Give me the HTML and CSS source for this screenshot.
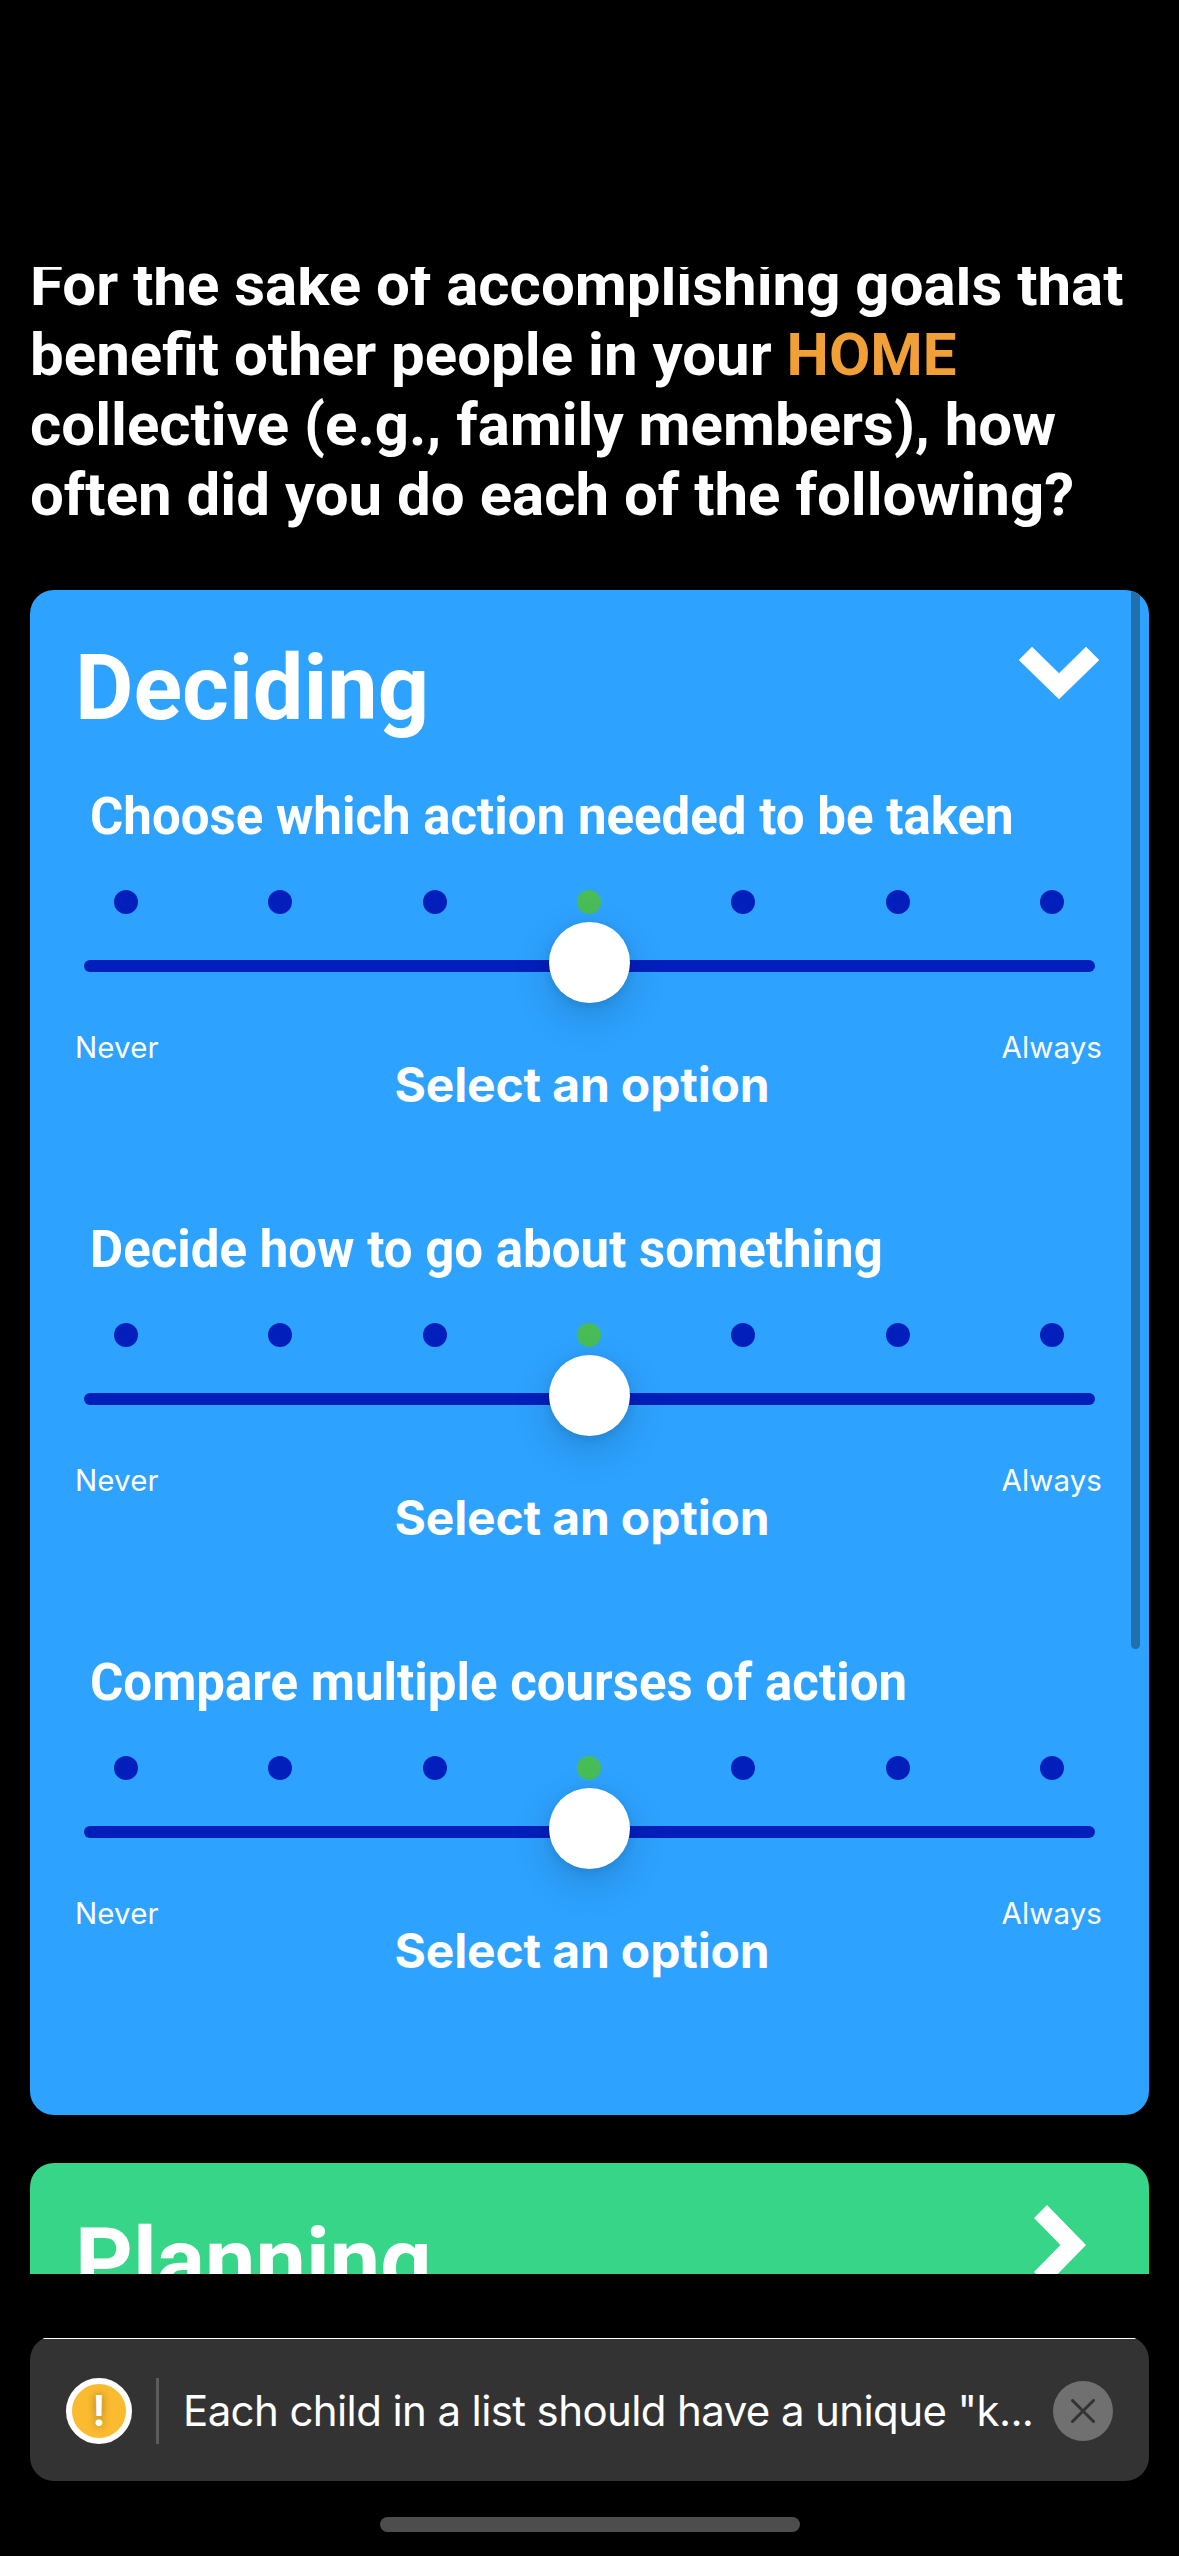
FILE: index.html
```
<!DOCTYPE html>
<html lang="en">
<head>
<meta charset="utf-8">
<title>Collective survey</title>
<link rel="stylesheet" href="styles.css">
</head>
<body>
<main class="screen">
  <div class="scroll">
    <h1 class="prompt">For the sake of accomplishing goals that<br>benefit other people in your <span class="accent">HOME</span><br>collective (e.g., family members), how<br>often did you do each of the following?</h1>

    <section class="card deciding">
      <header class="card-head">
        <h2>Deciding</h2>
        <svg class="chevron down" viewBox="0 0 80 52"><path d="M13 0 40 26.500 67 0 80 13 40 52 0 13Z" fill="#fff" stroke="#fff" stroke-width=".5" stroke-linejoin="round"/></svg>
      </header>
      <div class="question">
        <h3>Choose which action needed to be taken</h3>
        <div class="dots"><i></i><i></i><i></i><i class="on"></i><i></i><i></i><i></i></div>
        <div class="slider"><div class="track"></div><div class="thumb"></div></div>
        <div class="ends"><span>Never</span><span>Always</span></div>
        <p class="answer">Select an option</p>
      </div>
      <div class="question">
        <h3>Decide how to go about something</h3>
        <div class="dots"><i></i><i></i><i></i><i class="on"></i><i></i><i></i><i></i></div>
        <div class="slider"><div class="track"></div><div class="thumb"></div></div>
        <div class="ends"><span>Never</span><span>Always</span></div>
        <p class="answer">Select an option</p>
      </div>
      <div class="question">
        <h3>Compare multiple courses of action</h3>
        <div class="dots"><i></i><i></i><i></i><i class="on"></i><i></i><i></i><i></i></div>
        <div class="slider"><div class="track"></div><div class="thumb"></div></div>
        <div class="ends"><span>Never</span><span>Always</span></div>
        <p class="answer">Select an option</p>
      </div>
      <div class="scrollbar"></div>
    </section>

    <section class="card planning">
      <header class="card-head">
        <h2>Planning</h2>
        <svg class="chevron right" viewBox="0 0 52 80"><path d="M0 13 13 0 52 40 13 80 0 67 26.500 40Z" fill="#fff"/></svg>
      </header>
    </section>
  </div>

  <aside class="toast">
    <div class="badge"><span>!</span></div>
    <div class="divider"></div>
    <p class="message">Each child in a list should have a unique "k...</p>
    <div class="close"><svg viewBox="0 0 24 24"><path d="M1.500 1.500 22.500 22.500M22.500 1.500 1.500 22.500" stroke="#333" stroke-width="3" stroke-linecap="round"/></svg></div>
  </aside>
  <div class="home-indicator"></div>
</main>
</body>
</html>
```
FILE: styles.css
```
* { box-sizing: border-box; margin: 0; padding: 0; }
body { background: #000; }
.screen {
  width: 1179px; height: 2556px; padding-top: 267px; overflow: hidden;
  display: flex; flex-direction: column; background: #000; color: #fff;
  font-family: Roboto, "Noto Sans", sans-serif;
}
.scroll { height: 2007px; flex: none; overflow: hidden; padding: 0 30px; }
.prompt {
  margin-top: -17.5px; height: 340.5px; font-size: 60px; line-height: 70.3px;
  font-weight: 700; white-space: nowrap;
}
.accent { color: #f0a037; }
.card { border-radius: 24px; overflow: hidden; padding: 0 45px; }
.deciding { position: relative; height: 1525px; background: #2da2ff; }
.planning { margin-top: 48px; height: 240px; background: #37d587; }
.card-head { display: flex; justify-content: space-between; height: 186px; }
.card-head h2 { margin-top: 46px; font-size: 90px; line-height: 106px; font-weight: 700; }
.chevron { display: block; flex: none; overflow: visible; }
.down { width: 80px; height: 52px; margin: 57px 5px 0 0; }
.right { width: 52px; height: 80px; margin: 42px 18px 0 0; }

.question { height: 433px; display: flex; flex-direction: column; }
.question h3 {
  margin: 11px 0 0 15px; font-size: 51px; line-height: 60px;
  font-weight: 700; white-space: nowrap;
}
.dots { display: flex; justify-content: space-between; margin: 43px 40px 0 39px; }
.dots i { width: 24px; height: 24px; border-radius: 50%; background: #021fbc; }
.dots .on { background: #48bd57; }
.slider { display: grid; justify-items: center; margin: 8px 9px 0; height: 81px; }
.track { grid-area: 1 / 1; width: 100%; height: 12px; margin-top: 38px; border-radius: 6px; background: #021fbc; }
.thumb {
  grid-area: 1 / 1; width: 81px; height: 81px; border-radius: 50%; background: #fff;
  box-shadow: 0 14px 40px rgba(0, 0, 0, .16), 0 2px 10px rgba(0, 0, 0, .1);
}
.ends {
  display: flex; justify-content: space-between; margin-top: 26px; padding-right: 2px;
  font-family: Inter, sans-serif; font-size: 29.5px; line-height: 36px; height: 36px; letter-spacing: .1px;
}
.answer {
  margin-top: -9px; text-align: center; padding-right: 15px;
  font-family: Inter, sans-serif; font-size: 48px; line-height: 58px; font-weight: 700;
  letter-spacing: -.15px; white-space: nowrap;
}
.scrollbar {
  position: absolute; top: 0; right: 9px; width: 9px; height: 1059px;
  border-radius: 0 0 5px 5px; background: #1f70ad;
}

.toast {
  flex: none; display: flex; align-items: center; width: 1119px; height: 145px;
  margin: 62px 30px 0; padding: 5px 36px 0; border-radius: 24px; overflow: hidden;
  background: linear-gradient(#000 2px, #fff 2px, #fff 3px, #333 3px);
}
.badge {
  flex: none; width: 66px; height: 66px; border: 6px solid #fff; border-radius: 50%; background: #fabb30;
  display: flex; align-items: center; justify-content: center;
  font-family: Inter, sans-serif; font-weight: 600; font-size: 42px; line-height: 54px;
  text-shadow: 0 0 9px rgba(0, 0, 0, .4);
}
.divider { flex: none; width: 3px; height: 66px; margin-left: 24px; background: #5c5c5c; }
.message {
  flex: 1; min-width: 0; margin-left: 24px; font-family: Inter, sans-serif; font-size: 42px; line-height: 50px;
  letter-spacing: -.61px; white-space: nowrap;
}
.close {
  flex: none; width: 60px; height: 60px; border-radius: 50%; background: #707070;
  display: flex; align-items: center; justify-content: center;
}
.close svg { width: 24px; height: 24px; }
.home-indicator { flex: none; width: 420px; height: 15px; margin: 36px 0 0 380px; border-radius: 8px; background: #4d4d4d; }
```
